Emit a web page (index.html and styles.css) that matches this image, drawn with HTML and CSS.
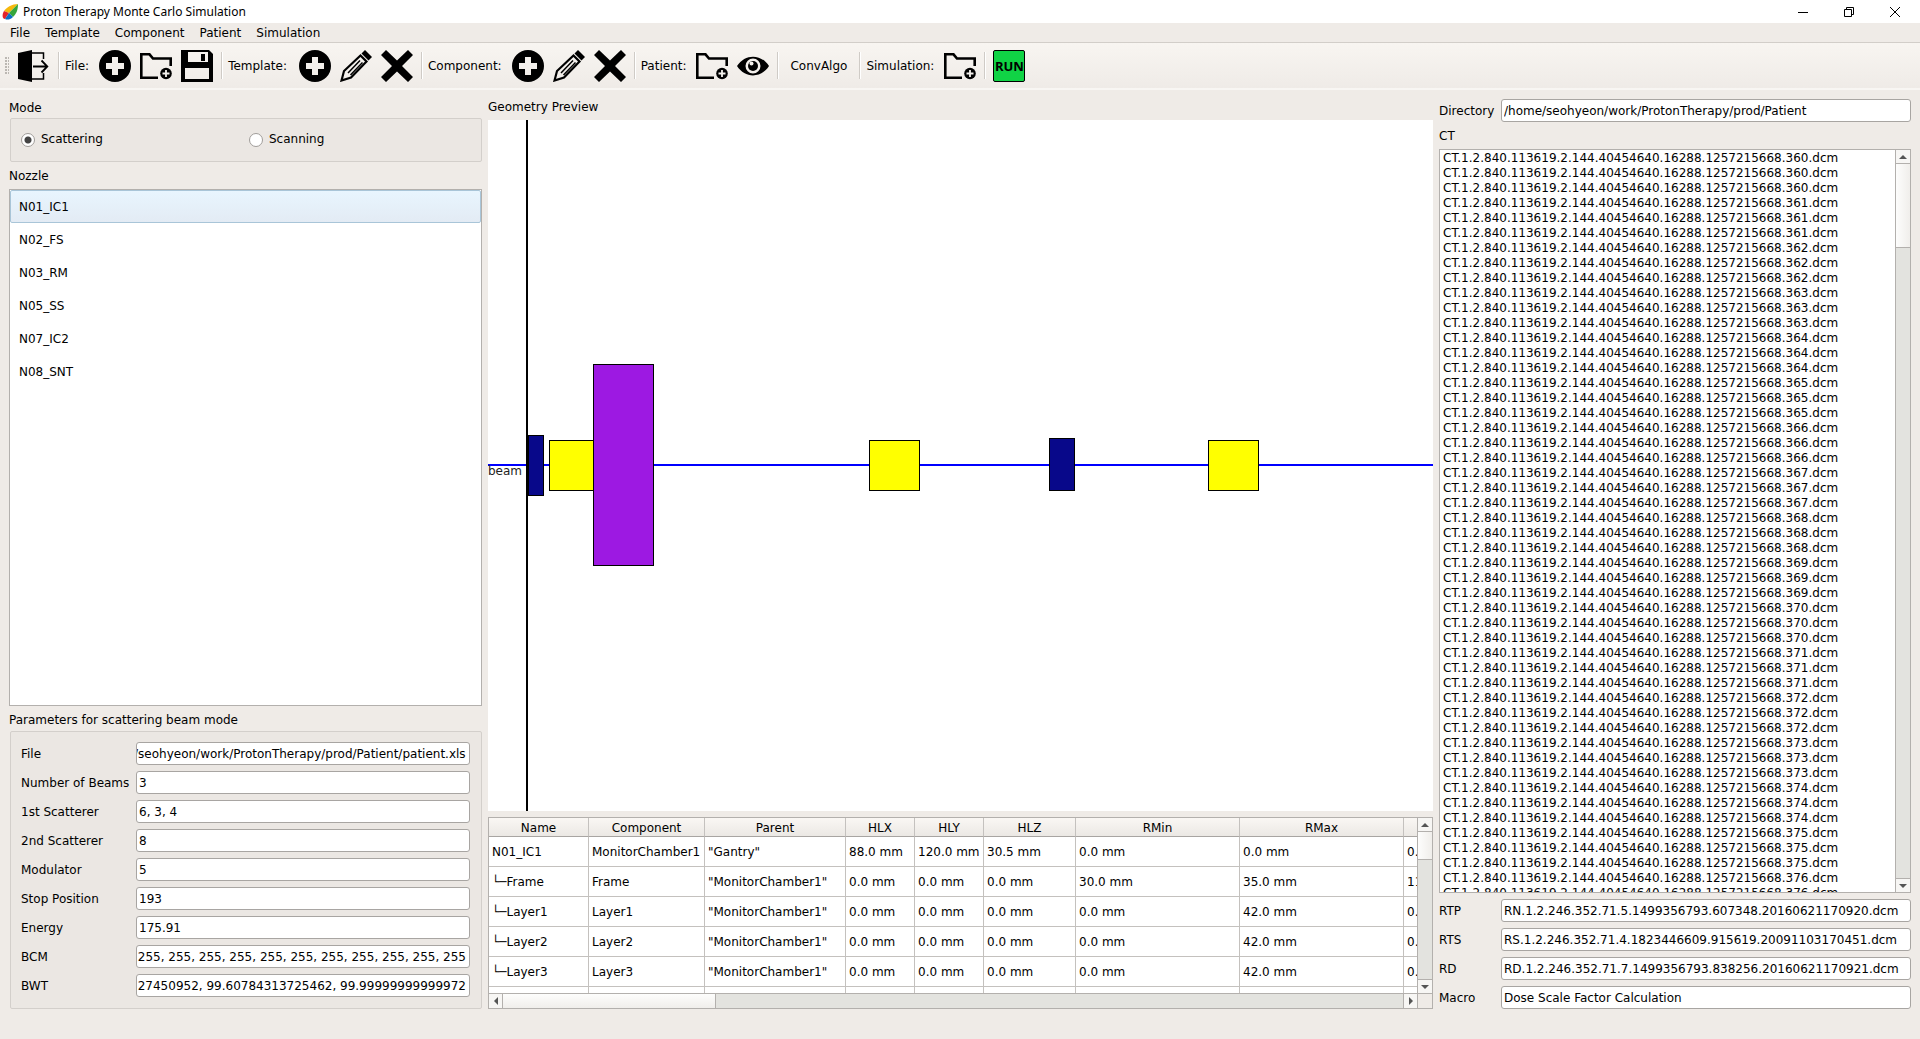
FILE: index.html
```html
<!DOCTYPE html>
<html lang="en">
<head>
<meta charset="utf-8">
<title>Proton Therapy Monte Carlo Simulation</title>
<link rel="stylesheet" href="styles.css">
</head>
<body>
<svg class="defs" aria-hidden="true">
  <symbol id="i-exit" viewBox="0 0 32 32"><path d="M0 3 14 0V32L0 29Z"/><path d="M14 3H25.500V9M25.500 23V29H14" fill="none" stroke="#000" stroke-width="1.500"/><path d="M15 16.500H29M23.500 10.500 29.300 16.500 23.500 22.500" fill="none" stroke="#000" stroke-width="1.800"/></symbol>
  <symbol id="i-add" viewBox="0 0 32 32"><path fill-rule="evenodd" d="M16 0A16 16 0 1 1 16 32A16 16 0 1 1 16 0ZM13 7V13H7V19H13V25H19V19H25V13H19V7Z"/></symbol>
  <symbol id="i-folder" viewBox="0 0 32 32"><path d="M18 27.700H1.300V4.300H9.500L13 8.500H30.700V16" fill="none" stroke="#000" stroke-width="2.600"/><circle cx="26" cy="23.500" r="5.800"/><path d="M26 20V27M22.500 23.500H29.500" stroke="#f4f1ed" stroke-width="1.800"/></symbol>
  <symbol id="i-save" viewBox="0 0 32 32"><path fill-rule="evenodd" d="M0 0H28L32 4V32H0ZM7 2V12H27V2ZM4 18V29H28V18Z"/><path d="M20 4H24V11H20Z"/></symbol>
  <symbol id="i-edit" viewBox="0 0 32 32"><path d="M20.500 5.500 26.500 11.500 11 27.500 1.500 30.500 4 21Z" fill="none" stroke="#000" stroke-width="2.200"/><path d="M20 10.500 8 23M22.500 12.500 10.500 25" stroke="#000" stroke-width="1.500"/><path d="M21.500 3.500 25 0 32 7 28.500 10.500Z"/></symbol>
  <symbol id="i-delete" viewBox="0 0 32 32"><path d="M5 0 16 10.500 27 0 32 5 21 16 32 27 27 32 16 21.500 5 32 0 27 11 16 0 5Z"/></symbol>
  <symbol id="i-eye" viewBox="0 0 32 32"><path fill-rule="evenodd" d="M0 16C8 3.500 24 3.500 32 16C24 28.500 8 28.500 0 16ZM16 8.500A7.500 7.500 0 1 0 16 23.500A7.500 7.500 0 1 0 16 8.500Z"/><circle cx="16" cy="16" r="5"/><circle cx="14.500" cy="13.500" r="2" fill="#f4f1ed"/></symbol>
  <symbol id="i-up" viewBox="0 0 8 4"><path d="M0 4 4 0 8 4Z" fill="#555"/></symbol>
  <symbol id="i-down" viewBox="0 0 8 4"><path d="M0 0H8L4 4Z" fill="#555"/></symbol>
  <symbol id="i-left" viewBox="0 0 4 8"><path d="M4 0V8L0 4Z" fill="#555"/></symbol>
  <symbol id="i-right" viewBox="0 0 4 8"><path d="M0 0 4 4 0 8Z" fill="#555"/></symbol>
</svg>

<header class="titlebar">
  <svg class="logo" viewBox="0 0 16 16" aria-hidden="true"><path d="M2 7C5 3 10 0 16 0L7 9Z" fill="#f6b80c"/><path d="M16 0C16 5 15 9 11 13L7 9Z" fill="#35a63c"/><path d="M2 7 7 9 3 15C0 15 0 10 2 7Z" fill="#e3232b"/><path d="M7 9 11 13C8 16 5 16 3 15Z" fill="#0c6fc4"/></svg>
  <h1>Proton Therapy Monte Carlo Simulation</h1>
  <div class="window-buttons">
    <button aria-label="Minimize"><svg viewBox="0 0 10 10"><path d="M0 5.500H10"/></svg></button>
    <button aria-label="Restore"><svg viewBox="0 0 10 10"><path d="M.5 2.500H7.500V9.500H.5ZM2.500 2.500V.5H9.500V7.500H7.500"/></svg></button>
    <button aria-label="Close"><svg viewBox="0 0 10 10"><path d="M0 0 10 10M10 0 0 10"/></svg></button>
  </div>
</header>

<nav class="menubar">
  <button>File</button><button>Template</button><button>Component</button><button>Patient</button><button>Simulation</button>
</nav>

<div class="toolbar" role="toolbar">
  <span class="grip"></span>
  <button aria-label="Exit"><svg><use href="#i-exit"/></svg></button>
  <span class="sep"></span>
  <span class="tool-label">File:</span>
  <button aria-label="New file"><svg><use href="#i-add"/></svg></button>
  <button aria-label="Open file"><svg><use href="#i-folder"/></svg></button>
  <button aria-label="Save file"><svg><use href="#i-save"/></svg></button>
  <span class="sep"></span>
  <span class="tool-label wide">Template:</span>
  <button aria-label="New template"><svg><use href="#i-add"/></svg></button>
  <button aria-label="Edit template"><svg><use href="#i-edit"/></svg></button>
  <button aria-label="Delete template"><svg><use href="#i-delete"/></svg></button>
  <span class="sep"></span>
  <span class="tool-label">Component:</span>
  <button aria-label="New component"><svg><use href="#i-add"/></svg></button>
  <button aria-label="Edit component"><svg><use href="#i-edit"/></svg></button>
  <button aria-label="Delete component"><svg><use href="#i-delete"/></svg></button>
  <span class="sep"></span>
  <span class="tool-label">Patient:</span>
  <button aria-label="Open patient"><svg><use href="#i-folder"/></svg></button>
  <button aria-label="View patient"><svg><use href="#i-eye"/></svg></button>
  <span class="sep"></span>
  <button class="text-tool">ConvAlgo</button>
  <span class="sep"></span>
  <span class="tool-label">Simulation:</span>
  <button aria-label="Open simulation"><svg><use href="#i-folder"/></svg></button>
  <span class="sep"></span>
  <button><span class="run">RUN</span></button>
</div>

<main>
  <section class="column">
    <h2 class="mode-title">Mode</h2>
    <div class="group modes">
      <label><input type="radio" name="mode" checked>Scattering</label>
      <label><input type="radio" name="mode">Scanning</label>
    </div>
    <h2 class="spaced">Nozzle</h2>
    <ul class="nozzles">
      <li class="selected">N01_IC1</li>
      <li>N02_FS</li>
      <li>N03_RM</li>
      <li>N05_SS</li>
      <li>N07_IC2</li>
      <li>N08_SNT</li>
    </ul>
    <h2 class="params-title">Parameters for scattering beam mode</h2>
    <form class="group params">
      <label for="p-file">File</label><input id="p-file" class="from-end" value="/home/seohyeon/work/ProtonTherapy/prod/Patient/patient.xls">
      <label for="p-beams">Number of Beams</label><input id="p-beams" value="3">
      <label for="p-s1">1st Scatterer</label><input id="p-s1" value="6, 3, 4">
      <label for="p-s2">2nd Scatterer</label><input id="p-s2" value="8">
      <label for="p-mod">Modulator</label><input id="p-mod" value="5">
      <label for="p-stop">Stop Position</label><input id="p-stop" value="193">
      <label for="p-energy">Energy</label><input id="p-energy" value="175.91">
      <label for="p-bcm">BCM</label><input id="p-bcm" class="from-end" value="255, 255, 255, 255, 255, 255, 255, 255, 255, 255, 255">
      <label for="p-bwt">BWT</label><input id="p-bwt" class="from-end" value="27450952, 99.60784313725462, 99.99999999999972">
    </form>
  </section>

  <section class="column">
    <h2 class="preview-title">Geometry Preview</h2>
    <svg class="preview" role="img" aria-label="Beam line geometry">
      <path class="beam" d="M0 345H6000"/>
      <path class="axis" d="M39 0V6000"/>
      <text x="0" y="355">beam</text>
      <g class="parts">
        <rect class="navy" x="40.500" y="315.500" width="15" height="60"/>
        <rect class="yellow" x="61.500" y="320.500" width="50" height="50"/>
        <rect class="purple" x="105.500" y="244.500" width="60" height="201"/>
        <rect class="yellow" x="381.500" y="320.500" width="50" height="50"/>
        <rect class="navy" x="561.500" y="318.500" width="25" height="52"/>
        <rect class="yellow" x="720.500" y="320.500" width="50" height="50"/>
      </g>
    </svg>
    <div class="table-frame">
      <div class="viewport">
        <table>
          <colgroup><col class="c-name"><col class="c-comp"><col class="c-parent"><col class="c-hl"><col class="c-hl"><col class="c-hlz"><col class="c-r"><col class="c-r"><col></colgroup>
          <thead><tr><th>Name</th><th>Component</th><th>Parent</th><th>HLX</th><th>HLY</th><th>HLZ</th><th>RMin</th><th>RMax</th><th></th></tr></thead>
          <tbody>
            <tr><td>N01_IC1</td><td>MonitorChamber1</td><td>"Gantry"</td><td>88.0 mm</td><td>120.0 mm</td><td>30.5 mm</td><td>0.0 mm</td><td>0.0 mm</td><td>0.</td></tr>
            <tr><td>└─Frame</td><td>Frame</td><td>"MonitorChamber1"</td><td>0.0 mm</td><td>0.0 mm</td><td>0.0 mm</td><td>30.0 mm</td><td>35.0 mm</td><td>11</td></tr>
            <tr><td>└─Layer1</td><td>Layer1</td><td>"MonitorChamber1"</td><td>0.0 mm</td><td>0.0 mm</td><td>0.0 mm</td><td>0.0 mm</td><td>42.0 mm</td><td>0.</td></tr>
            <tr><td>└─Layer2</td><td>Layer2</td><td>"MonitorChamber1"</td><td>0.0 mm</td><td>0.0 mm</td><td>0.0 mm</td><td>0.0 mm</td><td>42.0 mm</td><td>0.</td></tr>
            <tr><td>└─Layer3</td><td>Layer3</td><td>"MonitorChamber1"</td><td>0.0 mm</td><td>0.0 mm</td><td>0.0 mm</td><td>0.0 mm</td><td>42.0 mm</td><td>0.</td></tr>
            <tr><td></td><td></td><td></td><td></td><td></td><td></td><td></td><td></td><td></td></tr>
          </tbody>
        </table>
      </div>
      <div class="vbar">
        <button aria-label="Scroll up"><svg><use href="#i-up"/></svg></button>
        <span class="thumb short"></span>
        <button aria-label="Scroll down"><svg><use href="#i-down"/></svg></button>
      </div>
      <div class="hbar">
        <button aria-label="Scroll left"><svg><use href="#i-left"/></svg></button>
        <span class="thumb"></span>
        <button aria-label="Scroll right"><svg><use href="#i-right"/></svg></button>
      </div>
      <div class="corner"></div>
    </div>
  </section>

  <section class="column">
    <div class="field"><label for="dir">Directory</label><input id="dir" value="/home/seohyeon/work/ProtonTherapy/prod/Patient"></div>
    <h2 class="spaced">CT</h2>
    <div class="ct-frame">
      <ul class="ct-list">
        <li>CT.1.2.840.113619.2.144.40454640.16288.1257215668.360.dcm</li>
        <li>CT.1.2.840.113619.2.144.40454640.16288.1257215668.360.dcm</li>
        <li>CT.1.2.840.113619.2.144.40454640.16288.1257215668.360.dcm</li>
        <li>CT.1.2.840.113619.2.144.40454640.16288.1257215668.361.dcm</li>
        <li>CT.1.2.840.113619.2.144.40454640.16288.1257215668.361.dcm</li>
        <li>CT.1.2.840.113619.2.144.40454640.16288.1257215668.361.dcm</li>
        <li>CT.1.2.840.113619.2.144.40454640.16288.1257215668.362.dcm</li>
        <li>CT.1.2.840.113619.2.144.40454640.16288.1257215668.362.dcm</li>
        <li>CT.1.2.840.113619.2.144.40454640.16288.1257215668.362.dcm</li>
        <li>CT.1.2.840.113619.2.144.40454640.16288.1257215668.363.dcm</li>
        <li>CT.1.2.840.113619.2.144.40454640.16288.1257215668.363.dcm</li>
        <li>CT.1.2.840.113619.2.144.40454640.16288.1257215668.363.dcm</li>
        <li>CT.1.2.840.113619.2.144.40454640.16288.1257215668.364.dcm</li>
        <li>CT.1.2.840.113619.2.144.40454640.16288.1257215668.364.dcm</li>
        <li>CT.1.2.840.113619.2.144.40454640.16288.1257215668.364.dcm</li>
        <li>CT.1.2.840.113619.2.144.40454640.16288.1257215668.365.dcm</li>
        <li>CT.1.2.840.113619.2.144.40454640.16288.1257215668.365.dcm</li>
        <li>CT.1.2.840.113619.2.144.40454640.16288.1257215668.365.dcm</li>
        <li>CT.1.2.840.113619.2.144.40454640.16288.1257215668.366.dcm</li>
        <li>CT.1.2.840.113619.2.144.40454640.16288.1257215668.366.dcm</li>
        <li>CT.1.2.840.113619.2.144.40454640.16288.1257215668.366.dcm</li>
        <li>CT.1.2.840.113619.2.144.40454640.16288.1257215668.367.dcm</li>
        <li>CT.1.2.840.113619.2.144.40454640.16288.1257215668.367.dcm</li>
        <li>CT.1.2.840.113619.2.144.40454640.16288.1257215668.367.dcm</li>
        <li>CT.1.2.840.113619.2.144.40454640.16288.1257215668.368.dcm</li>
        <li>CT.1.2.840.113619.2.144.40454640.16288.1257215668.368.dcm</li>
        <li>CT.1.2.840.113619.2.144.40454640.16288.1257215668.368.dcm</li>
        <li>CT.1.2.840.113619.2.144.40454640.16288.1257215668.369.dcm</li>
        <li>CT.1.2.840.113619.2.144.40454640.16288.1257215668.369.dcm</li>
        <li>CT.1.2.840.113619.2.144.40454640.16288.1257215668.369.dcm</li>
        <li>CT.1.2.840.113619.2.144.40454640.16288.1257215668.370.dcm</li>
        <li>CT.1.2.840.113619.2.144.40454640.16288.1257215668.370.dcm</li>
        <li>CT.1.2.840.113619.2.144.40454640.16288.1257215668.370.dcm</li>
        <li>CT.1.2.840.113619.2.144.40454640.16288.1257215668.371.dcm</li>
        <li>CT.1.2.840.113619.2.144.40454640.16288.1257215668.371.dcm</li>
        <li>CT.1.2.840.113619.2.144.40454640.16288.1257215668.371.dcm</li>
        <li>CT.1.2.840.113619.2.144.40454640.16288.1257215668.372.dcm</li>
        <li>CT.1.2.840.113619.2.144.40454640.16288.1257215668.372.dcm</li>
        <li>CT.1.2.840.113619.2.144.40454640.16288.1257215668.372.dcm</li>
        <li>CT.1.2.840.113619.2.144.40454640.16288.1257215668.373.dcm</li>
        <li>CT.1.2.840.113619.2.144.40454640.16288.1257215668.373.dcm</li>
        <li>CT.1.2.840.113619.2.144.40454640.16288.1257215668.373.dcm</li>
        <li>CT.1.2.840.113619.2.144.40454640.16288.1257215668.374.dcm</li>
        <li>CT.1.2.840.113619.2.144.40454640.16288.1257215668.374.dcm</li>
        <li>CT.1.2.840.113619.2.144.40454640.16288.1257215668.374.dcm</li>
        <li>CT.1.2.840.113619.2.144.40454640.16288.1257215668.375.dcm</li>
        <li>CT.1.2.840.113619.2.144.40454640.16288.1257215668.375.dcm</li>
        <li>CT.1.2.840.113619.2.144.40454640.16288.1257215668.375.dcm</li>
        <li>CT.1.2.840.113619.2.144.40454640.16288.1257215668.376.dcm</li>
        <li>CT.1.2.840.113619.2.144.40454640.16288.1257215668.376.dcm</li>
      </ul>
      <div class="vbar">
        <button aria-label="Scroll up"><svg><use href="#i-up"/></svg></button>
        <span class="thumb long"></span>
        <button aria-label="Scroll down"><svg><use href="#i-down"/></svg></button>
      </div>
    </div>
    <div class="field"><label for="rtp">RTP</label><input id="rtp" value="RN.1.2.246.352.71.5.1499356793.607348.20160621170920.dcm"></div>
    <div class="field"><label for="rts">RTS</label><input id="rts" value="RS.1.2.246.352.71.4.1823446609.915619.20091103170451.dcm"></div>
    <div class="field"><label for="rd">RD</label><input id="rd" value="RD.1.2.246.352.71.7.1499356793.838256.20160621170921.dcm"></div>
    <div class="field"><label for="macro">Macro</label><input id="macro" value="Dose Scale Factor Calculation"></div>
  </section>
</main>
<script src="script.js"></script>
</body>
</html>
```
FILE: styles.css
```css
* { box-sizing: border-box; }

body {
  margin: 0;
  height: 100vh;
  display: flex;
  flex-direction: column;
  overflow: hidden;
  background: #efebe7;
  color: #000;
  font: 12px/15px "DejaVu Sans", sans-serif;
}

button, input { font: inherit; color: inherit; }
button { padding: 0; border: 0; background: none; }
ul { margin: 0; padding: 0; list-style: none; }
.defs { display: none; }

/* Title bar */
.titlebar {
  flex: none;
  height: 23px;
  display: flex;
  align-items: center;
  padding: 0 2px;
  background: #fff;
}
.logo { width: 16px; height: 16px; }
.titlebar h1 {
  margin: 0 0 0 5px;
  font: 12px/17px "Noto Sans", sans-serif;
}
.window-buttons { margin-left: auto; display: flex; }
.window-buttons button { width: 46px; height: 20px; display: grid; place-items: center; }
.window-buttons svg { width: 10px; height: 10px; fill: none; stroke: #000; }

/* Menu bar */
.menubar {
  flex: none;
  height: 20px;
  display: flex;
  padding-left: 3px;
  border-bottom: 1px solid #d2cec9;
}
.menubar button { padding: 2px 8px 0 7px; }

/* Toolbar */
.toolbar {
  flex: none;
  height: 47px;
  display: flex;
  align-items: center;
  padding-left: 5px;
  background: linear-gradient(#f8f5f1, #efebe7);
  border-bottom: 2px solid;
  border-image: linear-gradient(#b3b0ad 50%, #f8f6f3 50%) 2;
}
.toolbar svg { display: block; width: 32px; height: 32px; }
.toolbar button { flex: none; padding: 0 4px; margin-right: 1px; }
.toolbar .text-tool { padding: 2px 8px 0; height: 32px; }
.grip {
  width: 4px;
  height: 17px;
  margin-right: 5px;
  background: radial-gradient(circle at 1px 1px, #bbb7b2 1px, transparent 1px) 0 0 / 3px 3px;
}
.sep {
  width: 2px;
  height: 27px;
  margin: 0 3px;
  border-left: 1px solid #cfcbc6;
  border-right: 1px solid #fff;
}
.tool-label { padding: 2px 6px 0 2px; }
.tool-label.wide { padding-right: 8px; }
.run {
  display: block;
  width: 32px;
  height: 32px;
  border: 1px solid #000;
  border-radius: 2px;
  background: #10d345;
  text-align: center;
  font: bold 13px/30px "Open Sans", sans-serif;
}

/* Three columns */
main {
  flex: 1;
  min-height: 0;
  display: grid;
  grid-template-columns: minmax(0, 473fr) minmax(0, 945fr) minmax(0, 472fr);
  gap: 6px;
  padding: 9px 9px 30px;
}
.column { min-height: 0; display: flex; flex-direction: column; }
h2 { flex: none; margin: 0; font-size: 12px; font-weight: normal; line-height: 17px; }
.mode-title { line-height: 19px; }
.spaced { margin: 6px 0 4px; }
.params-title { margin: 6px 0 2px; }
.preview-title { margin-bottom: 4px; }

.group {
  margin-left: 1px;
  border: 1px solid #d3cfcb;
  border-radius: 2px;
  background: #ebe7e3;
}
.modes {
  flex: none;
  height: 44px;
  padding: 0 10px 1px;
  display: grid;
  grid-template-columns: 1fr 1fr;
  gap: 6px;
  align-items: center;
}
.modes label { display: flex; align-items: center; gap: 6px; }
.modes input {
  appearance: none;
  width: 14px;
  height: 14px;
  margin: 0;
  border: 1px solid #a09d9a;
  border-radius: 50%;
  background: #fff;
}
.modes input:checked { background: radial-gradient(circle, #444 3px, #fff 4px); }

.nozzles {
  flex: 1;
  min-height: 0;
  overflow: hidden;
  border: 1px solid #b3b0ad;
  background: #fff;
}
.nozzles li { padding: 2px 9px 0; line-height: 31px; }
.nozzles .selected {
  padding: 2px 8px 0;
  line-height: 29px;
  border: 1px solid #a9c5d8;
  border-radius: 2px;
  background: linear-gradient(#e8f5fe, #e3ebf4);
}

.params {
  flex: none;
  display: grid;
  grid-template-columns: 109px 1fr;
  gap: 6px;
  padding: 10px 11px 11px 10px;
  align-items: center;
}
.params label, .field label { padding-top: 2px; }
input:not([type=radio]) {
  width: 100%;
  min-width: 0;
  height: 23px;
  padding: 0 2px;
  border: 1px solid #a8a5a2;
  border-radius: 3px;
  background: #fff;
}
input.from-end { padding: 0 3px 0 0; text-align: right; }

/* Preview */
.preview { flex: 1; min-height: 0; width: 100%; background: #fff; }
.beam { stroke: #00f; stroke-width: 2; }
.axis { stroke: #000; stroke-width: 2; }
.preview text { fill: #222; }
.parts { stroke: #000; }
.navy { fill: #08088a; }
.yellow { fill: #ff0; }
.purple { fill: #9d19e2; }

/* Component table */
.table-frame {
  flex: none;
  height: 192px;
  margin-top: 6px;
  display: grid;
  grid-template: minmax(0, 1fr) 15px / minmax(0, 1fr) 15px;
  border: 1px solid #b3b0ad;
  background: #fff;
}
.viewport { overflow: hidden; }
table { width: 100%; table-layout: fixed; border-spacing: 0; }
.c-name { width: 100px; }
.c-comp { width: 116px; }
.c-parent { width: 141px; }
.c-hl { width: 69px; }
.c-hlz { width: 92px; }
.c-r { width: 164px; }
th, td {
  padding: 2px 0 0 3px;
  border: solid #c4c1be;
  border-width: 0 1px 1px 0;
  white-space: nowrap;
  overflow: hidden;
}
th:last-child, td:last-child { border-right: 0; }
th {
  height: 19px;
  padding: 2px 0 0;
  font-weight: normal;
  border-bottom-color: #a8a5a2;
  background: linear-gradient(#faf7f4, #ebe8e4);
}
td { height: 30px; }

/* Scroll bars */
.vbar, .hbar { display: flex; background: #e3e3df; }
.vbar { flex: none; width: 15px; flex-direction: column; border-left: 1px solid #b3b0ad; }
.hbar { border-top: 1px solid #b3b0ad; }
.vbar button, .hbar button { flex: none; width: 14px; height: 14px; display: grid; place-items: center; background: #f7f6f4; }
.vbar svg { width: 8px; height: 4px; }
.hbar svg { width: 4px; height: 8px; }
.vbar button:first-child { border-bottom: 1px solid #b3b0ad; }
.vbar button:last-child { margin-top: auto; border-top: 1px solid #b3b0ad; }
.hbar button:first-child { border-right: 1px solid #b3b0ad; }
.hbar button:last-child { margin-left: auto; border-left: 1px solid #b3b0ad; }
.vbar .thumb { background: linear-gradient(90deg, #fdfdfc, #f0eeeb); border-bottom: 1px solid #b3b0ad; }
.hbar .thumb { width: 23%; background: linear-gradient(#fdfdfc, #f0eeeb); border-right: 1px solid #b3b0ad; }
.vbar .short { height: 16%; }
.vbar .long { height: 84px; }
.corner { border: solid #b3b0ad; border-width: 1px 0 0 1px; background: #efebe7; }

/* Patient files */
.field { flex: none; display: grid; grid-template-columns: 62px minmax(0, 1fr); align-items: center; }
.field + .field, .ct-frame + .field { margin-top: 6px; }
.ct-frame { flex: 1; min-height: 0; display: flex; border: 1px solid #b3b0ad; background: #fff; }
.ct-list { flex: 1; min-width: 0; padding: 1px 0 0 3px; overflow: hidden; white-space: nowrap; }
```
FILE: script.js
```js
// Long values show their end, as after typing them in.
document.querySelectorAll('.from-end').forEach(function (field) {
  field.scrollLeft = field.scrollWidth;
});
```
